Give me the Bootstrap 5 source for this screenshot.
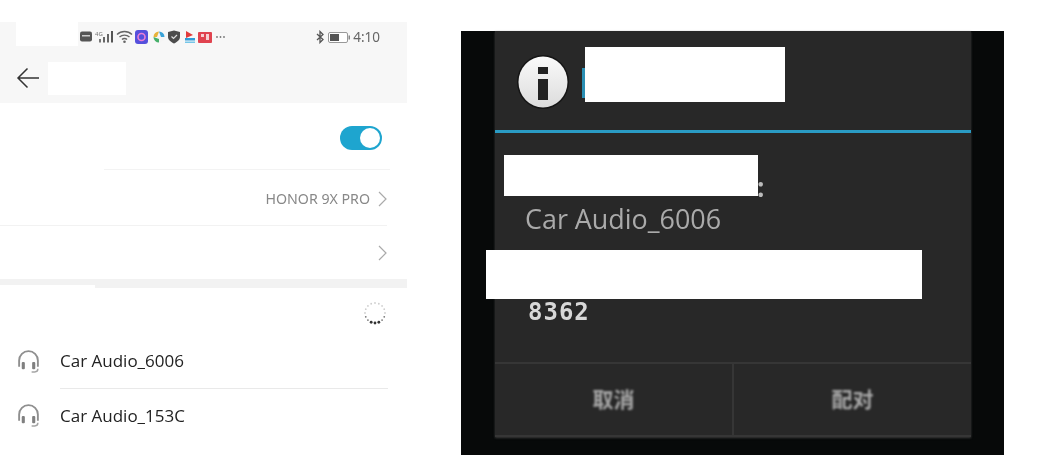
<!DOCTYPE html>
<html lang="en">
<head>
  <meta charset="UTF-8">
  <title>Bluetooth pairing</title>
  <link href="https://cdn.jsdelivr.net/npm/bootstrap@5.3.0/dist/css/bootstrap.min.css" rel="stylesheet">
  <style>
    body { width: 1037px; height: 464px; overflow: hidden; background: #fff; position: relative; font-family: "Open Sans", "Noto Sans CJK SC", sans-serif; }
    .shot-row { padding-top: 22px; }

    /* phone settings panel */
    .phone { width: 407px; height: 420px; position: relative; }
    .phone-head { height: 81px; background: #f7f7f7; }
    .status-line { height: 30px; padding-left: 80px; padding-right: 27px; filter: blur(.55px); }
    .status-time { font-size: 13.5px; color: #666; font-family: "Noto Sans", sans-serif; }
    .battery-icon { margin-right: -2px; }
    .title-line { height: 51px; padding-left: 16px; }
    .row-one { height: 67px; margin-left: 104px; margin-right: 17px; padding-right: 8px; padding-top: 4px; border-bottom: 1px solid #f3f3f3; }
    .row-two { height: 56px; margin-right: 20px; padding-top: 3px; border-bottom: 1px solid #f2f2f2; }
    .row-three { height: 53px; margin-right: 20px; }
    .band { height: 9px; background: #f2f2f2; }
    .switch-pill { width: 42px; height: 24px; border-radius: 12px; background: #1ea5cf; padding: 2px; filter: blur(.4px); }
    .switch-knob { width: 20px; height: 20px; border-radius: 50%; background: #fff; }
    .device-value { font-size: 14.2px; color: #888; font-family: "Noto Sans", sans-serif; filter: blur(.45px); }
    .spin-row { height: 46px; padding-right: 20px; padding-top: 3px; }
    .device-row { padding-left: 17px; padding-right: 19px; }
    .device-first { height: 55px; }
    .device-second { height: 53px; }
    .device-name { font-size: 17px; color: #222; font-family: "Open Sans", sans-serif; filter: blur(.25px); }
    .device-text { height: 100%; flex-grow: 1; margin-left: 20px; }
    .device-line { border-bottom: 1px solid #e9e9e9; }

    /* dark dialog */
    .dark-back { width: 543px; height: 424px; margin-left: 54px; margin-top: 9px; background: #070909; position: relative; }
    .dialog { width: 476px; height: 406px; margin-left: 34px; background: #282828; box-shadow: 0 1px 2px #3a3a3a; }
    .dialog-head { height: 102px; padding-left: 22px; border-bottom: 3px solid #2a9bc4; }
    .info-round { width: 52px; height: 54px; margin-top: 3px; filter: blur(.5px); }
    .dialog-body { height: 229px; position: relative; }
    .label-tail { position: absolute; left: 262px; top: 41px; font-size: 26px; color: #bbb; line-height: 1; font-weight: 700; filter: blur(.7px); }
    .audio-name { position: absolute; left: 30px; top: 68px; font-size: 26.9px; color: #aaa; line-height: 36px; filter: blur(.3px); }
    .pin-code { position: absolute; left: 33px; top: 162px; font-size: 24px; color: #d8d8d8; font-weight: 700; line-height: 34px; font-family: "DejaVu Sans Mono", monospace; letter-spacing: 1px; filter: blur(.7px); }
    .dialog-foot { height: 75px; border-top: 2px solid #363636; border-bottom: 2px solid #363636; }
    .foot-btn { width: 50%; color: #a8a8a8; font-size: 21px; font-weight: 700; filter: blur(.9px); }
    .foot-split { width: 2px; background: #363636; }
    .title-peek { position: absolute; left: 582px; top: 68px; width: 4px; height: 30px; background: #2a8fb4; }

    /* white patches lying over the picture */
    .patch { position: absolute; background: #fff; }
    .patch-a { left: 16px; top: 22px; width: 62px; height: 24px; }
    .patch-b { left: 48px; top: 62px; width: 78px; height: 33px; }
    .patch-c { left: 585px; top: 47px; width: 200px; height: 55px; }
    .patch-d { left: 504px; top: 155px; width: 254px; height: 41px; }
    .patch-e { left: 486px; top: 250px; width: 436px; height: 49px; }
    .patch-f { left: 0; top: 285px; width: 95px; height: 3px; }
  </style>
</head>
<body>
  <div class="shot-row d-flex align-items-start">
    <div class="phone">
      <div class="phone-head">
        <div class="status-line d-flex align-items-center justify-content-between">
          <svg width="148" height="16" viewBox="0 0 148 16">
            <rect x="0" y="2.500" width="12" height="10" rx="2" fill="#555"/>
            <rect x="2" y="6" width="8" height="1.500" fill="#ccc"/>
            <text x="15" y="7" font-size="6" fill="#777" font-family="Noto Sans">4G</text>
            <rect x="19" y="10" width="2" height="3.500" fill="#777"/>
            <rect x="23" y="8" width="2" height="5.500" fill="#666"/>
            <rect x="27" y="5" width="2" height="8.500" fill="#666"/>
            <rect x="31" y="2" width="2" height="11.500" fill="#555"/>
            <path d="M37 5.500a11 11 0 0 1 15 0M39.500 8a7.500 7.500 0 0 1 10 0M42 10.500a3.500 3.500 0 0 1 5 0" fill="none" stroke="#666" stroke-width="1.400"/>
            <circle cx="44.500" cy="12.800" r="1.300" fill="#666"/>
            <rect x="55" y="1" width="13" height="14" rx="3" fill="#5550dc"/>
            <circle cx="61.500" cy="8" r="3.500" fill="none" stroke="#ec7fd4" stroke-width="1.600"/>
            <circle cx="79" cy="8" r="5.500" fill="#f5f5f5"/>
            <path d="M79 2.500a5.500 5.500 0 0 1 5.500 5.500h-3.500z" fill="#3aa3d8"/>
            <path d="M73.500 8a5.500 5.500 0 0 0 5.500 5.500v-3.500z" fill="#46b06a"/>
            <path d="M79 2.500a5.500 5.500 0 0 0-5.500 5.500h3.500z" fill="#e8b33a"/>
            <path d="M88 3l6-1.500 6 1.500v5c0 3-3 5-6 6.500-3-1.500-6-3.500-6-6.500z" fill="#4d4d4d"/>
            <path d="M91.500 7.500l2 2 3.500-3.500" fill="none" stroke="#ddd" stroke-width="1.200"/>
            <path d="M106 2l7 4-7 3z" fill="#e23c3c"/>
            <path d="M105 9h10v2.500h-10z" fill="#2e9bd8"/>
            <path d="M105 12.500h10v1.500h-10z" fill="#76c6e8"/>
            <rect x="118" y="3" width="14" height="11" rx="1" fill="#e0434f"/>
            <rect x="121" y="5" width="3" height="3" fill="#f6d0d3"/>
            <rect x="126" y="5" width="3" height="6" fill="#f6d0d3"/>
            <circle cx="137" cy="8" r=".9" fill="#777"/>
            <circle cx="140.500" cy="8" r=".9" fill="#777"/>
            <circle cx="144" cy="8" r=".9" fill="#777"/>
          </svg>
          <div class="d-flex align-items-center gap-1">
            <svg width="8" height="14" viewBox="0 0 8 14"><path d="M1 4l6 5.500L4 12.500V1.500L7 4.500 1 10" fill="none" stroke="#555" stroke-width="1.300"/></svg>
            <svg class="battery-icon" width="23" height="11" viewBox="0 0 23 11">
              <rect x=".5" y=".5" width="19" height="10" rx="1.500" fill="#fff" stroke="#999"/>
              <rect x="2" y="2" width="9" height="7" fill="#555"/>
              <rect x="20.500" y="3.500" width="1.500" height="4" fill="#888"/>
            </svg>
            <span class="status-time">4:10</span>
          </div>
        </div>
        <div class="title-line d-flex align-items-center">
          <svg width="24" height="22" viewBox="0 0 24 22"><path d="M23 11H2M11.500 1.500L2 11l9.500 9.500" fill="none" stroke="#333" stroke-width="1.500"/></svg>
        </div>
      </div>

      <div class="row-one d-flex align-items-center justify-content-end">
        <div class="switch-pill d-flex justify-content-end"><div class="switch-knob"></div></div>
      </div>
      <div class="row-two d-flex align-items-center justify-content-end gap-2">
        <span class="device-value">HONOR 9X PRO</span>
        <svg width="9" height="16" viewBox="0 0 9 16"><path d="M1 1l7 7-7 7" fill="none" stroke="#aaa" stroke-width="1.200"/></svg>
      </div>
      <div class="row-three d-flex align-items-center justify-content-end">
        <svg width="9" height="16" viewBox="0 0 9 16"><path d="M1 1l7 7-7 7" fill="none" stroke="#aaa" stroke-width="1.200"/></svg>
      </div>
      <div class="band"></div>

      <div class="spin-row d-flex align-items-center justify-content-end">
        <svg width="24" height="24" viewBox="0 0 24 24" id="spinner"></svg>
      </div>
      <div class="device-row device-first d-flex align-items-center">
        <svg width="23" height="25" viewBox="0 0 22 24">
          <path d="M2 17V11a9 9 0 0 1 18 0v6" fill="none" stroke="#8f8f8f" stroke-width="1.800"/>
          <rect x="4.500" y="12.500" width="3" height="7" rx="1" fill="#808080"/>
          <rect x="14.500" y="12.500" width="3" height="7" rx="1" fill="#808080"/>
          <path d="M20 19a3 3 0 0 1-3 3h-3" fill="none" stroke="#a5a5a5" stroke-width="1.400"/>
        </svg>
        <div class="device-text device-line d-flex align-items-center"><span class="device-name">Car Audio_6006</span></div>
      </div>
      <div class="device-row device-second d-flex align-items-center">
        <svg width="23" height="25" viewBox="0 0 22 24">
          <path d="M2 17V11a9 9 0 0 1 18 0v6" fill="none" stroke="#8f8f8f" stroke-width="1.800"/>
          <rect x="4.500" y="12.500" width="3" height="7" rx="1" fill="#808080"/>
          <rect x="14.500" y="12.500" width="3" height="7" rx="1" fill="#808080"/>
          <path d="M20 19a3 3 0 0 1-3 3h-3" fill="none" stroke="#a5a5a5" stroke-width="1.400"/>
        </svg>
        <div class="device-text d-flex align-items-center"><span class="device-name">Car Audio_153C</span></div>
      </div>
    </div>

    <div class="dark-back">
      <div class="dialog">
        <div class="dialog-head d-flex align-items-center">
          <svg class="info-round" viewBox="0 0 52 54">
            <defs>
              <linearGradient id="infoFill" x1="0" y1="0" x2="0" y2="1">
                <stop offset="0" stop-color="#fafafa"/>
                <stop offset="1" stop-color="#dcdcdc"/>
              </linearGradient>
            </defs>
            <ellipse cx="26" cy="27" rx="26" ry="27" fill="#151515"/>
            <ellipse cx="26" cy="27" rx="24.500" ry="25.500" fill="url(#infoFill)"/>
            <rect x="21" y="12" width="10" height="7" fill="#222"/>
            <rect x="21" y="24" width="10" height="21" fill="#222"/>
          </svg>
        </div>
        <div class="dialog-body">
          <span class="label-tail">:</span>
          <span class="audio-name">Car Audio_6006</span>
          <span class="pin-code">8362</span>
        </div>
        <div class="dialog-foot d-flex">
          <div class="foot-btn d-flex align-items-center justify-content-center">取消</div>
          <div class="foot-split"></div>
          <div class="foot-btn d-flex align-items-center justify-content-center">配对</div>
        </div>
      </div>
    </div>
  </div>

  <div class="title-peek"></div>
  <div class="patch patch-a"></div>
  <div class="patch patch-b"></div>
  <div class="patch patch-c"></div>
  <div class="patch patch-d"></div>
  <div class="patch patch-e"></div>
  <div class="patch patch-f"></div>

  <script>
    // loading ring: dots get darker towards the bottom
    const spinner = document.getElementById("spinner");
    let dots = "";
    for (let i = 0; i < 16; i++) {
      const a = i / 16 * Math.PI * 2;
      const d = Math.abs(a - Math.PI);
      const shade = d < 0.5 ? "#333" : d < 1.3 ? "#777" : "#cfcfcf";
      const r = d < 0.5 ? 1.4 : 0.9;
      dots += `<circle cx="${12 + 10 * Math.sin(a)}" cy="${12 - 10 * Math.cos(a)}" r="${r}" fill="${shade}"/>`;
    }
    spinner.innerHTML = dots;
  </script>
  <script src="https://cdn.jsdelivr.net/npm/bootstrap@5.3.0/dist/js/bootstrap.bundle.min.js"></script>
</body>
</html>
